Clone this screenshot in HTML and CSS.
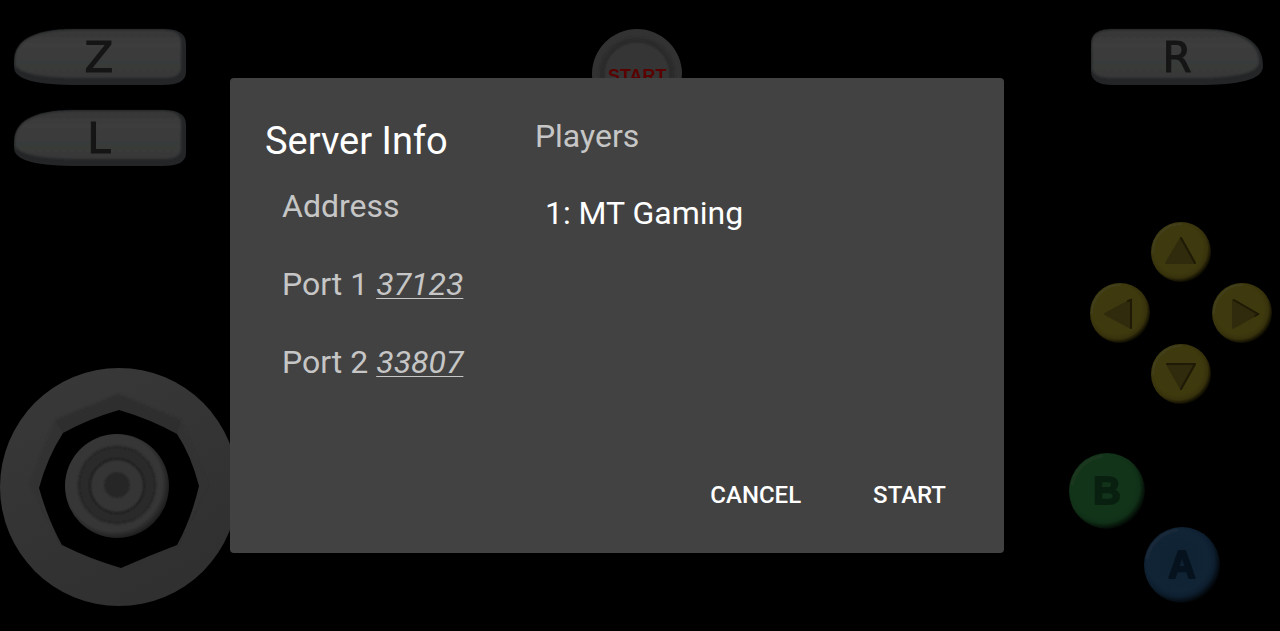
FILE: index.html
```html
<!DOCTYPE html>
<html lang="en">
<head>
<meta charset="utf-8">
<meta name="viewport" content="width=device-width, initial-scale=1">
<title>Server Info</title>
<link rel="stylesheet" href="styles.css">
</head>
<body>
<svg class="defs" width="0" height="0" aria-hidden="true">
  <defs>
    <filter id="soft" x="-10%" y="-10%" width="120%" height="120%"><feGaussianBlur stdDeviation="1"/></filter>
    <linearGradient id="grey" x1="0" y1="0" x2="0" y2="1">
      <stop offset="0" stop-color="#373737"/><stop offset=".3" stop-color="#3c3c3c"/><stop offset="1" stop-color="#373938"/>
    </linearGradient>
    <linearGradient id="gate" x1="0" y1="0" x2=".5" y2="1">
      <stop offset="0" stop-color="#393939"/><stop offset="1" stop-color="#303030"/>
    </linearGradient>
    <radialGradient id="yellow" cx=".45" cy=".44" r=".57">
      <stop offset="0" stop-color="#3e380e"/><stop offset=".72" stop-color="#3e3a0e"/><stop offset=".86" stop-color="#38320c"/><stop offset="1" stop-color="#080700"/>
    </radialGradient>
    <radialGradient id="green" cx=".45" cy=".44" r=".57">
      <stop offset="0" stop-color="#12331a"/><stop offset=".72" stop-color="#123519"/><stop offset=".84" stop-color="#103017"/><stop offset="1" stop-color="#010502"/>
    </radialGradient>
    <radialGradient id="blue" cx=".45" cy=".44" r=".57">
      <stop offset="0" stop-color="#0f2232"/><stop offset=".72" stop-color="#102436"/><stop offset=".84" stop-color="#0d1e2e"/><stop offset="1" stop-color="#010305"/>
    </radialGradient>
    <radialGradient id="knob" cx=".47" cy=".47" r=".54">
      <stop offset="0" stop-color="#373737"/><stop offset=".86" stop-color="#363636"/><stop offset="1" stop-color="#1c1c1c"/>
    </radialGradient>
    <g id="round">
      <path d="M2 30A28 28 0 0 1 30 2" fill="none" stroke="#45442a" stroke-width="2" stroke-linecap="round" opacity=".5"/>
    </g>
    <g id="shoulder">
      <path d="M0 34C0 13 18 1 60 1H148C164 1 172 5 172 16V44C172 53 164 57 148 57H65C24 57 0 52 0 39Z" fill="#232527"/>
      <g filter="url(#soft)">
        <path d="M1 32C1 14 18 2 60 2H148C162 2 167 6 167 15V39C167 48 160 50 148 50H65C30 50 5 46 1 37Z" fill="url(#grey)"/>
      </g>
    </g>
  </defs>
</svg>

<div class="pad">
  <button class="key key-z" type="button" aria-label="Z">
    <svg width="172" height="58" viewBox="0 0 172 58"><use href="#shoulder"/><text class="letter" x="85" y="44">Z</text></svg>
  </button>
  <button class="key key-l" type="button" aria-label="L">
    <svg width="172" height="58" viewBox="0 0 172 58"><use href="#shoulder"/><text class="letter" x="85" y="44">L</text></svg>
  </button>
  <button class="key key-r" type="button" aria-label="R">
    <svg width="172" height="58" viewBox="0 0 172 58">
      <path d="M0 16C0 5 8 1 22 1H112C152 1 172 14 172 38C172 52 148 57 105 57H22C8 57 0 53 0 43Z" fill="#232527"/>
      <g filter="url(#soft)">
        <path d="M1 15C1 6 8 2 22 2H112C148 2 168 15 168 34C168 45 145 50 105 50H22C8 50 1 47 1 39Z" fill="url(#grey)"/>
      </g>
      <text class="letter" x="86" y="44">R</text>
    </svg>
  </button>

  <button class="key key-start" type="button" aria-label="Start">
    <svg width="92" height="92" viewBox="0 0 92 92">
      <circle cx="46" cy="46" r="45" fill="#323232"/>
      <circle cx="46" cy="47" r="35" fill="#353535" stroke="#292929" stroke-width="5" filter="url(#soft)"/>
      <text class="start-label" x="46" y="54">START</text>
    </svg>
  </button>

  <button class="key key-stick" type="button" aria-label="Analog stick">
    <svg width="238" height="238" viewBox="0 0 238 238">
      <circle cx="119" cy="119" r="119" fill="url(#gate)"/>
      <g filter="url(#soft)">
        <path d="M119 26L181 52 208 117 177 177 121 200 62 177 30 115 55 52Z" fill="#313131"/>
        <path d="M119 26V42L63 65 55 52Z" fill="#2d2d2d"/>
        <path d="M119 26L181 52 177 66 119 42Z" fill="#2e2e2e"/>
      </g>
      <path d="M119 42Q150 51 177 66Q191 87 199 118Q191 152 177 177Q148 188 121 200Q90 191 62 177Q48 152 39 120Q47 90 63 65Q88 51 119 42Z" fill="#000"/>
      <circle cx="117" cy="118" r="52" fill="url(#knob)"/>
      <g filter="url(#soft)">
        <circle cx="117" cy="117" r="38" fill="#2b2b2b" stroke="#232323" stroke-width="2"/>
        <circle cx="117" cy="118" r="27" fill="#363636" stroke="#1e1e1e" stroke-width="2"/>
        <circle cx="117" cy="117" r="13" fill="#272727"/>
      </g>
    </svg>
  </button>

  <button class="key c-up" type="button" aria-label="C up">
    <svg width="60" height="60" viewBox="0 0 60 60"><circle cx="30" cy="30" r="30" fill="url(#yellow)"/><use href="#round"/>
      <path d="M30 16L44 41H15Z" fill="#302b0c" stroke="#302b0c" stroke-width="2" stroke-linejoin="round"/><path d="M30 16L44 41" stroke="#1e1a05" stroke-width="2" stroke-linecap="round"/></svg>
  </button>
  <button class="key c-left" type="button" aria-label="C left">
    <svg width="60" height="60" viewBox="0 0 60 60"><circle cx="30" cy="30" r="30" fill="url(#yellow)"/><use href="#round"/>
      <path d="M15 31L41 17V45Z" fill="#302b0c" stroke="#302b0c" stroke-width="2" stroke-linejoin="round"/><path d="M38 18L41 17V45" fill="none" stroke="#1e1a05" stroke-width="2" stroke-linecap="round"/></svg>
  </button>
  <button class="key c-right" type="button" aria-label="C right">
    <svg width="60" height="60" viewBox="0 0 60 60"><circle cx="30" cy="30" r="30" fill="url(#yellow)"/><use href="#round"/>
      <path d="M46 31L21 17V45Z" fill="#302b0c" stroke="#302b0c" stroke-width="2" stroke-linejoin="round"/><path d="M22 17L46 31 43 33" fill="none" stroke="#1e1a05" stroke-width="2" stroke-linecap="round"/></svg>
  </button>
  <button class="key c-down" type="button" aria-label="C down">
    <svg width="60" height="60" viewBox="0 0 60 60"><circle cx="30" cy="30" r="30" fill="url(#yellow)"/><use href="#round"/>
      <path d="M30 45L44 20H16Z" fill="#302b0c" stroke="#302b0c" stroke-width="2" stroke-linejoin="round"/><path d="M16 20H44L30 45" fill="none" stroke="#1e1a05" stroke-width="2" stroke-linecap="round" stroke-linejoin="round"/></svg>
  </button>

  <button class="key key-b" type="button" aria-label="B">
    <svg width="76" height="76" viewBox="0 0 76 76"><circle cx="38" cy="38" r="38" fill="url(#green)"/><path d="M3 32A36 36 0 0 1 34 3" fill="none" stroke="#263a25" stroke-width="3" opacity=".5"/><text class="face face-b" x="38" y="51">B</text></svg>
  </button>
  <button class="key key-a" type="button" aria-label="A">
    <svg width="76" height="76" viewBox="0 0 76 76"><circle cx="38" cy="38" r="38" fill="url(#blue)"/><path d="M3 32A36 36 0 0 1 34 3" fill="none" stroke="#222d3c" stroke-width="3" opacity=".5"/><text class="face face-a" x="38" y="51">A</text></svg>
  </button>
</div>

<main class="screen">
  <section class="dialog" role="dialog" aria-labelledby="title">
    <div class="columns">
      <div class="server">
        <h1 class="title" id="title">Server Info</h1>
        <ul class="fields">
          <li>Address</li>
          <li>Port 1 <a class="port" href="#port1">37123</a></li>
          <li>Port 2 <a class="port" href="#port2">33807</a></li>
        </ul>
      </div>
      <div class="players">
        <h2 class="subtitle">Players</h2>
        <p class="player">1: MT Gaming</p>
      </div>
    </div>
    <div class="actions">
      <button class="action" type="button">CANCEL</button>
      <button class="action" type="button">START</button>
    </div>
  </section>
</main>
</body>
</html>
```

FILE: styles.css
```css
* { box-sizing: border-box; }

body {
  margin: 0;
  min-height: 100vh;
  background: #000;
  color: #fff;
  font-family: Roboto, "Noto Sans", sans-serif;
}

.defs { position: absolute; }

/* On-screen controller, anchored to the corners of the window */
.pad {
  position: fixed;
  inset: 0;
  overflow: hidden;
}

.key {
  position: absolute;
  padding: 0;
  border: 0;
  background: none;
}

.key svg { display: block; }

.key-z { left: 14px; top: 28px; }
.key-l { left: 14px; top: 109px; }
.key-r { right: 17px; top: 28px; }
.key-start { left: calc(50% - 49px); top: 28px; }
.key-stick { left: 0; bottom: 25px; }
.c-up { right: 69px; top: 222px; }
.c-left { right: 130px; top: 283px; }
.c-right { right: 8px; top: 283px; }
.c-down { right: 69px; top: 344px; }
.key-b { right: 135px; bottom: 102px; }
.key-a { right: 60px; bottom: 28px; }

.letter {
  fill: #151515;
  stroke: #151515;
  stroke-width: 1px;
  font: 42px "DejaVu Sans", sans-serif;
  text-anchor: middle;
}

.start-label {
  fill: #5a0000;
  font: bold 18px "Liberation Sans", sans-serif;
  text-anchor: middle;
}

.face {
  font: bold 38px "Liberation Sans", sans-serif;
  text-anchor: middle;
  stroke-width: 2px;
  stroke-linejoin: round;
}

.face-b { fill: #092010; stroke: #092010; }
.face-a { fill: #06131e; stroke: #06131e; }

.screen {
  position: relative;
  display: flex;
  align-items: center;
  justify-content: center;
  min-height: 100vh;
  padding-right: 46px;
  pointer-events: none;
}

.dialog {
  width: 774px;
  max-width: 100%;
  padding: 39px 34px 18px 35px;
  border-radius: 4px;
  background: #424242;
  pointer-events: auto;
}

.columns {
  display: grid;
  grid-template-columns: 38% 1fr;
}

.title {
  margin: 0 0 22px;
  font-size: 38px;
  font-weight: 400;
  line-height: 48px;
}

.fields {
  display: grid;
  gap: 40px;
  margin: 0;
  padding: 0 0 0 17px;
  list-style: none;
  color: #c6c6c6;
  font-size: 32px;
  line-height: 38px;
}

.port {
  color: inherit;
  font-style: italic;
  text-decoration: underline;
  text-decoration-thickness: 1px;
  text-underline-offset: 3px;
  text-decoration-skip-ink: none;
}

.players { padding-left: 2px; }

.subtitle,
.player {
  margin: 0;
  font-size: 32px;
  font-weight: 400;
  line-height: 38px;
}

.subtitle {
  margin-bottom: 39px;
  color: #c6c6c6;
}

.player { padding-left: 10px; }

.actions {
  display: flex;
  justify-content: flex-end;
  gap: 24px;
  margin-top: 74px;
}

.action {
  padding: 26px 24px;
  border: 0;
  background: none;
  color: #fff;
  font: 500 24px/28px Roboto, "Noto Sans", sans-serif;
}
```
